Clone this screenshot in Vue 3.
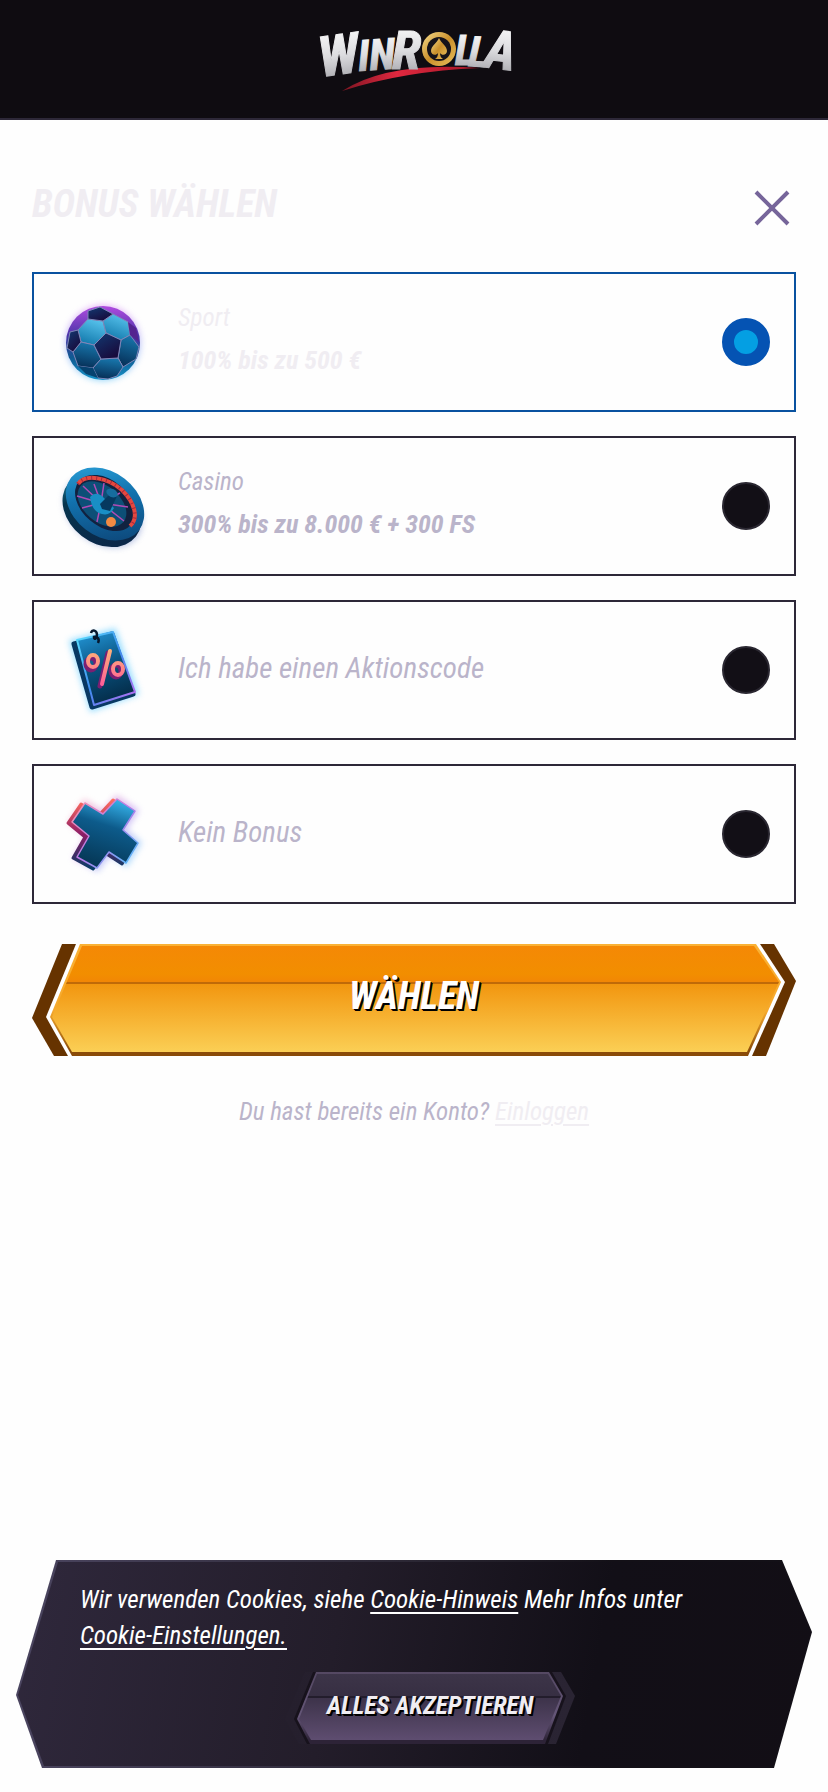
<template>
  <div class="page">
    <header class="topbar">
      <a href="#" class="logo" aria-label="WinRolla">
        <svg width="220" height="88" viewBox="-8 -8 220 88">
          <defs>
            <linearGradient id="silver" x1="0" y1="0" x2="0" y2="1">
              <stop offset="0" stop-color="#ffffff" />
              <stop offset="0.5" stop-color="#dcdcdf" />
              <stop offset="1" stop-color="#98989e" />
            </linearGradient>
            <linearGradient id="gold" x1="0" y1="0" x2="1" y2="1">
              <stop offset="0" stop-color="#f7dd8c" />
              <stop offset="0.5" stop-color="#c98f2b" />
              <stop offset="1" stop-color="#e9bf5c" />
            </linearGradient>
            <linearGradient id="swoosh" x1="0" y1="0" x2="1" y2="0">
              <stop offset="0" stop-color="#7d1522" />
              <stop offset="0.4" stop-color="#e0283f" />
              <stop offset="1" stop-color="#a01525" />
            </linearGradient>
          </defs>
          <path d="M30 68Q76 38 168 45Q92 48 30 68Z" fill="url(#swoosh)" />
          <g class="logo-text" fill="url(#silver)" stroke="url(#silver)">
            <text x="9" y="54" font-size="56" transform="rotate(-8 9 54)">W</text>
            <text x="47" y="48" font-size="43" transform="rotate(-4 47 48)">IN</text>
            <text x="80" y="46" font-size="54">R</text>
            <text x="143" y="42" font-size="42">L</text>
            <text x="156" y="43" font-size="42" transform="rotate(3 156 43)">L</text>
            <text x="171" y="44" font-size="54" transform="rotate(7 171 44)">A</text>
          </g>
          <circle cx="127" cy="26" r="17" fill="url(#gold)" />
          <circle cx="127" cy="26" r="12" fill="#16131a" />
          <path
            d="M127 15c2 5 8 8 8 13 0 4-5 5-7 2 0 3 1 5 3 6h-8c2-1 3-3 3-6-2 3-7 2-7-2 0-5 6-8 8-13z"
            fill="url(#gold)"
          />
        </svg>
      </a>
    </header>

    <main class="content">
      <div class="title-row">
        <h1>BONUS WÄHLEN</h1>
        <button class="close" type="button" aria-label="Schließen">
          <svg width="36" height="36" viewBox="0 0 36 36">
            <path d="M2 2L34 34M34 2L2 34" stroke="#76659a" stroke-width="4" />
          </svg>
        </button>
      </div>

      <form @submit.prevent>
        <div class="options">
          <label
            v-for="option in options"
            :key="option.id"
            :class="['option', { active: selected === option.id }]"
          >
            <svg v-if="option.id === 'sport'" class="icon" viewBox="0 0 96 96">
              <defs>
                <filter id="glow" x="-20%" y="-20%" width="140%" height="140%">
                  <feGaussianBlur stdDeviation="3" />
                </filter>
                <linearGradient id="rim" x1="0" y1="0" x2="0" y2="1">
                  <stop offset="0" stop-color="#b04be0" />
                  <stop offset="0.4" stop-color="#4b35a8" />
                  <stop offset="0.7" stop-color="#0f5b92" />
                  <stop offset="1" stop-color="#1793c9" />
                </linearGradient>
                <linearGradient id="halo" x1="0" y1="0" x2="0" y2="1">
                  <stop offset="0" stop-color="#d66bf0" />
                  <stop offset="1" stop-color="#35b5f5" />
                </linearGradient>
                <linearGradient id="panel" x1="0.7" y1="0" x2="0.3" y2="1">
                  <stop offset="0" stop-color="#58c4ee" />
                  <stop offset="1" stop-color="#1278ab" />
                </linearGradient>
                <linearGradient id="panelDark" x1="0.6" y1="0" x2="0.4" y2="1">
                  <stop offset="0" stop-color="#1878ae" />
                  <stop offset="1" stop-color="#062f57" />
                </linearGradient>
                <linearGradient id="patch" x1="0" y1="0" x2="0.6" y2="1">
                  <stop offset="0" stop-color="#123a73" />
                  <stop offset="1" stop-color="#180b3c" />
                </linearGradient>
              </defs>
              <circle cx="47" cy="49" r="38" fill="url(#halo)" filter="url(#glow)" opacity="0.5" />
              <circle cx="47" cy="49" r="37" fill="url(#rim)" />
              <g stroke="#7f86b8" stroke-width="1" stroke-linejoin="round">
                <path d="M32 25L47 27L50 39L38 51L25 48L22 36Z" fill="url(#panel)" />
                <path d="M47 27L57 20L72 28L74 41L65 46L50 39Z" fill="url(#panel)" />
                <path d="M25 48L38 51L45 65L37 74L22 72L17 58Z" fill="url(#panelDark)" />
                <path d="M65 46L74 41L83 53L80 65L67 73L62 64Z" fill="url(#panelDark)" />
                <path d="M45 65L62 64L67 73L61 82L52 85L42 84L37 74Z" fill="url(#panelDark)" />
                <path d="M50 39L65 46L62 64L45 65L38 51Z" fill="url(#patch)" />
                <path d="M32 17L44 13L57 20L47 27L32 25Z" fill="url(#patch)" />
                <path d="M22 36L25 48L17 58L11 54L14 38Z" fill="url(#patch)" />
              </g>
              <path d="M72 28L80 34L83 48L74 41Z" fill="#54248f" />
              <path d="M22 72L37 74L42 84L30 80Z" fill="#06426f" />
            </svg>

            <svg v-else-if="option.id === 'casino'" class="icon" viewBox="0 0 96 96">
              <defs>
                <linearGradient id="wheel" x1="0" y1="0" x2="1" y2="0.7">
                  <stop offset="0" stop-color="#2fa8df" />
                  <stop offset="0.5" stop-color="#1271ad" />
                  <stop offset="1" stop-color="#0d497c" />
                </linearGradient>
                <linearGradient id="wheelSide" x1="0" y1="0" x2="1" y2="0.5">
                  <stop offset="0" stop-color="#27a0bf" />
                  <stop offset="0.4" stop-color="#06344d" />
                  <stop offset="1" stop-color="#0b2849" />
                </linearGradient>
              </defs>
              <ellipse cx="47" cy="53" rx="43" ry="32" transform="rotate(38 47 53)" fill="#9aa9d8" filter="url(#glow)" opacity="0.7" />
              <ellipse cx="46" cy="52" rx="43" ry="33" transform="rotate(38 46 52)" fill="url(#wheelSide)" />
              <ellipse cx="49" cy="46" rx="43" ry="32" transform="rotate(38 49 46)" fill="url(#wheel)" />
              <ellipse cx="49" cy="45" rx="34" ry="23" transform="rotate(40 49 45)" fill="#112240" />
              <path d="M22 26C30 15 52 20 66 32C79 45 83 60 74 68" fill="none" stroke="#e4483f" stroke-width="4" />
              <path d="M22 26C30 15 52 20 66 32C79 45 83 60 74 68" fill="none" stroke="#a82a3c" stroke-width="4" stroke-dasharray="1 4" />
              <ellipse cx="46" cy="46" rx="28" ry="18" transform="rotate(40 46 46)" fill="#0d4f77" />
              <path
                d="M45 45L27 28M45 45L38 26M45 45L48 25M45 45L64 35M45 45L72 49M45 45L68 63M45 45L41 64M45 45L26 50M45 45L21 38"
                stroke="#b14bb5"
                stroke-width="1.5"
              />
              <path d="M34 39Q39 33 46 38L58 50Q54 58 46 56Q36 54 34 39Z" fill="#198fc5" />
              <path d="M44 46L57 33L61 38L54 53L46 51Z" fill="#06395f" />
              <ellipse cx="56" cy="35" rx="6" ry="4" transform="rotate(25 56 35)" fill="#176d9e" />
              <circle cx="55" cy="64" r="5" fill="#f28a43" />
            </svg>

            <svg v-else-if="option.id === 'code'" class="icon" viewBox="0 0 96 96">
              <defs>
                <linearGradient id="tag" x1="0.2" y1="0" x2="0.5" y2="1">
                  <stop offset="0" stop-color="#2192d2" />
                  <stop offset="0.5" stop-color="#09517e" />
                  <stop offset="1" stop-color="#042b47" />
                </linearGradient>
                <linearGradient id="tagEdge" x1="0" y1="0" x2="1" y2="1">
                  <stop offset="0" stop-color="#5ee2ff" />
                  <stop offset="0.5" stop-color="#3d8bee" />
                  <stop offset="1" stop-color="#c46cf3" />
                </linearGradient>
                <linearGradient id="percent" gradientUnits="userSpaceOnUse" x1="48" y1="28" x2="48" y2="64">
                  <stop offset="0" stop-color="#ffb078" />
                  <stop offset="1" stop-color="#ff5c98" />
                </linearGradient>
              </defs>
              <path d="M16 20L58 9L80 71L36 87Z" fill="#59c9ff" stroke="#59c9ff" stroke-width="5" filter="url(#glow)" opacity="0.6" />
              <path d="M18 22L56 12L77 72L36 85Z" fill="#083863" stroke="#083863" stroke-width="5" stroke-linejoin="round" />
              <path d="M21 18L57 10L79 70L38 83Z" fill="url(#tag)" stroke="url(#tagEdge)" stroke-width="2" stroke-linejoin="round" />
              <path d="M35 11C36 7 41 8 41 13C41 17 38 18 38 15C41 14 44 17 42 21" fill="none" stroke="#06172d" stroke-width="2.5" />
              <g transform="translate(-1 2)" fill="none" stroke="#7a1f72" stroke-width="5" stroke-linecap="round">
                <ellipse cx="36" cy="40" rx="5" ry="6" />
                <ellipse cx="61" cy="47" rx="5" ry="6" />
                <path d="M53 29L45 62" />
              </g>
              <g fill="none" stroke="url(#percent)" stroke-width="4" stroke-linecap="round">
                <ellipse cx="37" cy="39" rx="5" ry="6" />
                <ellipse cx="62" cy="47" rx="5" ry="6" />
                <path d="M54 29L46 62" />
              </g>
            </svg>

            <svg v-else class="icon" viewBox="0 0 96 96">
              <defs>
                <linearGradient id="cross" x1="0.7" y1="0" x2="0.4" y2="1">
                  <stop offset="0" stop-color="#37b4ec" />
                  <stop offset="0.4" stop-color="#0d5b8b" />
                  <stop offset="1" stop-color="#053654" />
                </linearGradient>
                <linearGradient id="crossSide" x1="0" y1="0" x2="0" y2="1">
                  <stop offset="0" stop-color="#ff6d5e" />
                  <stop offset="0.5" stop-color="#8c1c66" />
                  <stop offset="1" stop-color="#083c66" />
                </linearGradient>
                <linearGradient id="crossEdge" x1="0" y1="0" x2="1" y2="1">
                  <stop offset="0" stop-color="#ff94a8" />
                  <stop offset="0.5" stop-color="#b778e8" />
                  <stop offset="1" stop-color="#44c9ff" />
                </linearGradient>
              </defs>
              <path :d="crossPath" fill="url(#crossEdge)" stroke="url(#crossEdge)" stroke-width="6" filter="url(#glow)" opacity="0.5" />
              <path :d="crossPath" transform="translate(-4 1)" fill="url(#crossSide)" stroke="url(#crossSide)" stroke-width="3" stroke-linejoin="round" />
              <path :d="crossPath" fill="url(#cross)" stroke="url(#crossEdge)" stroke-width="1.5" stroke-linejoin="round" />
            </svg>

            <span class="option-text">
              <template v-if="option.offer">
                <span class="kind">{{ option.name }}</span>
                <strong class="offer">{{ option.offer }}</strong>
              </template>
              <span v-else class="single">{{ option.name }}</span>
            </span>
            <input v-model="selected" type="radio" name="bonus" :value="option.id" />
          </label>
        </div>

        <button class="plate choose" type="submit">
          <span class="rim"></span>
          <span class="gap"></span>
          <span class="edge"></span>
          <span class="face"></span>
          <span class="caption">WÄHLEN</span>
        </button>
      </form>

      <p class="login">Du hast bereits ein Konto? <a href="#">Einloggen</a></p>
    </main>

    <aside class="cookie">
      <div class="cookie-inner">
        <p>
          Wir verwenden Cookies, siehe <a href="#">Cookie-Hinweis</a> Mehr Infos unter
          <a href="#">Cookie-Einstellungen.</a>
        </p>
        <button class="plate accept" type="button">
          <span class="rim"></span>
          <span class="gap"></span>
          <span class="edge"></span>
          <span class="face"></span>
          <span class="caption">ALLES AKZEPTIEREN</span>
        </button>
      </div>
    </aside>
  </div>
</template>

<script setup>
import { ref } from "vue";

const selected = ref("sport");

const options = [
  { id: "sport", name: "Sport", offer: "100% bis zu 500 €" },
  { id: "casino", name: "Casino", offer: "300% bis zu 8.000 € + 300 FS" },
  { id: "code", name: "Ich habe einen Aktionscode" },
  { id: "none", name: "Kein Bonus" },
];

const crossPath =
  "M29 17L47 28L61 13L79 25L67 44L82 57L70 77L53 66L41 82L21 71L33 50L16 36Z";
</script>

<style>
body {
  margin: 0;
  background: #fefefe;
}
</style>

<style scoped>
.page {
  min-height: 100vh;
  font-family: "Liberation Sans Narrow", "Roboto Condensed", "Open Sans Condensed", "DejaVu Sans Condensed", sans-serif;
  font-style: italic;
  color: #bab4ca;
}

.topbar {
  display: flex;
  justify-content: center;
  align-items: center;
  box-sizing: border-box;
  height: 120px;
  background: #0f0c11;
  border-bottom: 2px solid #2d2838;
}

.logo,
.logo svg {
  display: block;
}

.logo svg {
  overflow: visible;
}

.logo-text {
  font-weight: 700;
}

.content {
  padding: 56px 32px 240px;
}

.title-row {
  display: flex;
  justify-content: space-between;
  align-items: flex-start;
  margin-bottom: 32px;
}

h1 {
  margin: 0;
  font-size: 38px;
  line-height: 56px;
  font-weight: 700;
  color: #f0edf2;
}

button {
  border: 0;
  padding: 0;
  background: none;
  font: inherit;
  cursor: pointer;
}

.close {
  display: flex;
  justify-content: center;
  align-items: center;
  width: 48px;
  height: 64px;
}

.options {
  display: grid;
  gap: 24px;
}

.option {
  display: flex;
  align-items: center;
  gap: 26px;
  box-sizing: border-box;
  min-height: 140px;
  padding: 0 24px 0 22px;
  border: 2px solid #2d2838;
  cursor: pointer;
}

.option.active {
  border-color: #0952a0;
  color: #f0edf2;
}

.icon {
  flex: none;
  width: 96px;
  height: 96px;
}

.option-text {
  display: flex;
  flex: 1;
  flex-direction: column;
  padding-bottom: 4px;
}

.kind {
  font-size: 25px;
  line-height: 40px;
}

.offer {
  font-size: 26px;
  line-height: 44px;
}

.single {
  font-size: 29px;
  line-height: 44px;
}

input[type="radio"] {
  flex: none;
  appearance: none;
  box-sizing: border-box;
  width: 48px;
  height: 48px;
  margin: 0;
  border: 2px solid #2a2731;
  border-radius: 50%;
  background: #120f16;
  cursor: pointer;
}

input[type="radio"]:checked {
  border: 12px solid #0553b3;
  background: #049fe3;
}

/* layered bevelled buttons */
.plate {
  position: relative;
  display: flex;
  justify-content: center;
  align-items: center;
}

.plate .rim,
.plate .gap,
.plate .edge,
.plate .face {
  position: absolute;
  inset: 0;
}

.caption {
  position: relative;
  font-weight: 700;
}

.choose {
  width: 100%;
  height: 112px;
  margin-top: 40px;
  padding-bottom: 8px;
}

.choose .rim {
  background: #663300;
  clip-path: polygon(30px 0, calc(100% - 22px) 0, 100% 37px, calc(100% - 30px) 100%, 22px 100%, 0 74px);
}

.choose .gap {
  background: #ffffff;
  clip-path: polygon(44px 0, calc(100% - 36px) 0, calc(100% - 11px) 38px, calc(100% - 44px) 100%, 36px 100%, 14px 73px);
}

.choose .edge {
  background: linear-gradient(#fab235 0, #f5a82c 60%, #8a4b08 96%, #8a4b08 100%);
  clip-path: polygon(48px 0, calc(100% - 40px) 0, calc(100% - 15px) 38px, calc(100% - 48px) 100%, 40px 100%, 18px 73px);
}

.choose .face {
  background: linear-gradient(#f58806 0, #f28e00 30px, #f28605 38px, #c06a08 38px, #c06a08 40px, #f2960f 40px, #fbcf55 108px);
  clip-path: polygon(50px 2px, calc(100% - 42px) 2px, calc(100% - 17px) 38px, calc(100% - 49px) 108px, 40px 108px, 20px 73px);
}

.choose .caption {
  font-size: 38px;
  line-height: 56px;
  color: #ffffff;
  text-shadow: 1px 1px 0 #000000, 2px 2px 0 #000000;
}

.login {
  margin: 36px 0 0;
  font-size: 25px;
  line-height: 40px;
  text-align: center;
}

a {
  color: inherit;
  white-space: nowrap;
  text-decoration-thickness: 2px;
  text-underline-offset: 4px;
}

.login a {
  color: #f0edf2;
}

.cookie {
  position: fixed;
  left: 16px;
  right: 16px;
  bottom: 24px;
  background: linear-gradient(90deg, #4b4560, #2b2734 50%, #131017 75%);
  clip-path: polygon(40px 0, calc(100% - 30px) 0, 100% 72px, calc(100% - 38px) 100%, 26px 100%, 0 135px);
}

.cookie-inner {
  padding: 22px 32px 24px 64px;
  background: linear-gradient(100deg, #2f283c 0, #231d2a 40%, #120f17 72%, #120e15 100%);
  clip-path: polygon(42px 2px, calc(100% - 31px) 2px, calc(100% - 1px) 72px, calc(100% - 39px) calc(100% - 2px), 28px calc(100% - 2px), 2px 135px);
}

.cookie p {
  margin: 0;
  font-size: 25px;
  line-height: 36px;
  color: #ffffff;
}

.accept {
  width: 290px;
  height: 72px;
  margin: 18px auto 0;
  padding-bottom: 4px;
}

.accept .rim {
  background: linear-gradient(90deg, #251f2d, #2a2433);
  clip-path: polygon(20px 0, calc(100% - 14px) 0, 100% 24px, calc(100% - 19px) 100%, 14px 100%, 0 47px);
}

.accept .gap {
  background: #17121c;
  clip-path: polygon(28px 0, calc(100% - 23px) 0, calc(100% - 9px) 24px, calc(100% - 27px) 100%, 22px 100%, 9px 47px);
}

.accept .edge {
  background: linear-gradient(#544862 0, #655678 60%, #2d2337 95%);
  clip-path: polygon(31px 0, calc(100% - 26px) 0, calc(100% - 12px) 24px, calc(100% - 30px) 100%, 25px 100%, 12px 47px);
}

.accept .face {
  background: linear-gradient(#3d3549 0, #372f43 24px, #231d2c 24px, #231d2c 26px, #3d334a 26px, #5e4d70 68px);
  clip-path: polygon(32px 2px, calc(100% - 27px) 2px, calc(100% - 14px) 24px, calc(100% - 32px) 68px, 26px 68px, 14px 47px);
}

.accept .caption {
  font-size: 25px;
  line-height: 36px;
  color: #f0edf2;
  text-shadow: 1px 1px 0 #000000, 2px 2px 0 #000000;
}
</style>
